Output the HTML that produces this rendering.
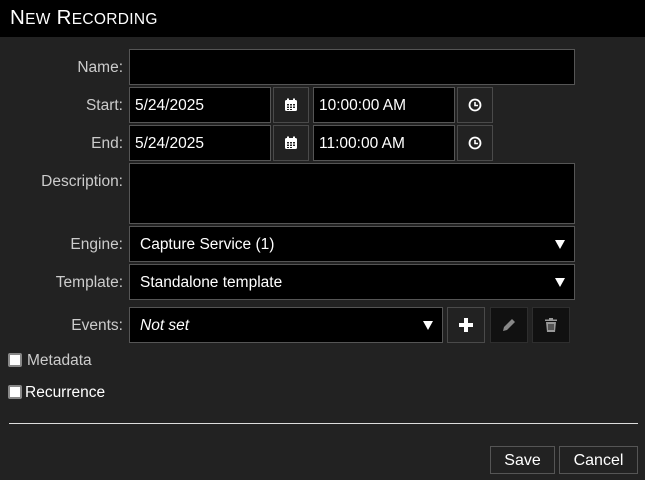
<!DOCTYPE html>
<html><head><meta charset="utf-8"><style>
*{box-sizing:border-box;margin:0;padding:0}
body{width:645px;height:480px;background:#222;font-family:"Liberation Sans",sans-serif;font-size:15.5px;color:#ddd;position:relative;overflow:hidden}
.hdr{position:absolute;left:0;top:0;width:645px;height:37px;background:#000;color:#fff;font-size:20.5px;padding:6px 0 0 10px;letter-spacing:0.3px}
.hdr small{font-size:15.5px}
.lbl{position:absolute;right:522px;color:#ccc;text-align:right;white-space:nowrap}
.in{position:absolute;background:#000;border:1px solid #555;color:#fff;padding-left:5px;line-height:36px;white-space:nowrap}
.btn{position:absolute;background:#222;border:1px solid #4a4a4a;display:flex;align-items:center;justify-content:center}
.dk{background:#111;border-color:#2e2e2e}
.arr{position:absolute;right:9px;top:13px;width:0;height:0;border-left:5px solid transparent;border-right:5px solid transparent;border-top:9px solid #fff}
.cb{position:absolute;width:14px;height:14px;background:#fff;border:2px solid #888;border-radius:2px}
.tb{position:absolute;background:#222;border:1px solid #555;color:#fff;text-align:center;line-height:28px;font-size:16px}
</style></head><body>
<div class="hdr">N<small>EW</small> R<small>ECORDING</small></div>

<div class="lbl" style="top:59px">Name:</div>
<div class="in" style="left:129px;top:49px;width:446px;height:36px"></div>

<div class="lbl" style="top:97px">Start:</div>
<div class="in" style="left:129px;top:87px;width:142px;height:36px">5/24/2025</div>
<div class="btn" style="left:273px;top:87px;width:36px;height:36px"><svg width="14" height="14" viewBox="0 0 14 14"><rect x="1" y="2" width="12" height="11" rx="1.5" fill="#fff"/><rect x="3" y="0.5" width="2" height="3" fill="#fff"/><rect x="9" y="0.5" width="2" height="3" fill="#fff"/><g fill="#222"><rect x="3" y="6" width="2" height="1.5"/><rect x="6" y="6" width="2" height="1.5"/><rect x="9" y="6" width="2" height="1.5"/><rect x="3" y="8.5" width="2" height="1.5"/><rect x="6" y="8.5" width="2" height="1.5"/><rect x="9" y="8.5" width="2" height="1.5"/><rect x="3" y="11" width="2" height="1"/><rect x="6" y="11" width="2" height="1"/></g></svg></div>
<div class="in" style="left:313px;top:87px;width:142px;height:36px">10:00:00 AM</div>
<div class="btn" style="left:457px;top:87px;width:36px;height:36px"><svg width="14" height="14" viewBox="0 0 14 14"><circle cx="7" cy="7" r="5.5" fill="none" stroke="#fff" stroke-width="1.8"/><path d="M7 4v3.5h3" fill="none" stroke="#fff" stroke-width="1.6"/></svg></div>

<div class="lbl" style="top:135px">End:</div>
<div class="in" style="left:129px;top:125px;width:142px;height:36px">5/24/2025</div>
<div class="btn" style="left:273px;top:125px;width:36px;height:36px"><svg width="14" height="14" viewBox="0 0 14 14"><rect x="1" y="2" width="12" height="11" rx="1.5" fill="#fff"/><rect x="3" y="0.5" width="2" height="3" fill="#fff"/><rect x="9" y="0.5" width="2" height="3" fill="#fff"/><g fill="#222"><rect x="3" y="6" width="2" height="1.5"/><rect x="6" y="6" width="2" height="1.5"/><rect x="9" y="6" width="2" height="1.5"/><rect x="3" y="8.5" width="2" height="1.5"/><rect x="6" y="8.5" width="2" height="1.5"/><rect x="9" y="8.5" width="2" height="1.5"/><rect x="3" y="11" width="2" height="1"/><rect x="6" y="11" width="2" height="1"/></g></svg></div>
<div class="in" style="left:313px;top:125px;width:142px;height:36px">11:00:00 AM</div>
<div class="btn" style="left:457px;top:125px;width:36px;height:36px"><svg width="14" height="14" viewBox="0 0 14 14"><circle cx="7" cy="7" r="5.5" fill="none" stroke="#fff" stroke-width="1.8"/><path d="M7 4v3.5h3" fill="none" stroke="#fff" stroke-width="1.6"/></svg></div>

<div class="lbl" style="top:173px">Description:</div>
<div class="in" style="left:129px;top:163px;width:446px;height:61px"></div>

<div class="lbl" style="top:236px">Engine:</div>
<div class="in" style="left:129px;top:226px;width:446px;height:36px;padding-left:10px">Capture Service (1)<div class="arr"></div></div>

<div class="lbl" style="top:274px">Template:</div>
<div class="in" style="left:129px;top:264px;width:446px;height:36px;padding-left:10px">Standalone template<div class="arr"></div></div>

<div class="lbl" style="top:317px">Events:</div>
<div class="in" style="left:129px;top:307px;width:314px;height:36px;padding-left:10px;font-style:italic">Not set<div class="arr"></div></div>
<div class="btn" style="left:447px;top:307px;width:38px;height:36px"><svg width="14" height="14" viewBox="0 0 14 14"><path d="M5 0h4v5h5v4H9v5H5V9H0V5h5z" fill="#fff"/></svg></div>
<div class="btn dk" style="left:490px;top:307px;width:38px;height:36px"><svg width="14" height="14" viewBox="0 0 14 14"><path d="M10 1l3 3-8 8-4 1 1-4z" fill="#888"/></svg></div>
<div class="btn dk" style="left:532px;top:307px;width:38px;height:36px"><svg width="12" height="14" viewBox="0 0 12 14"><path d="M4 0h4v1.5h4v1.5H0V1.5h4z" fill="#999"/><path d="M1 4h10l-1 10H2z" fill="#999"/><path d="M4 6v6M6 6v6M8 6v6" stroke="#111" stroke-width="1"/></svg></div>

<div class="cb" style="left:8px;top:353px"></div>
<div style="position:absolute;left:27px;top:352px;color:#ccc">Metadata</div>
<div class="cb" style="left:8px;top:385px"></div>
<div style="position:absolute;left:25px;top:384px;color:#fff">Recurrence</div>

<div style="position:absolute;left:9px;top:423px;width:629px;height:1px;background:#ddd"></div>

<div class="tb" style="left:490px;top:446px;width:65px;height:28px">Save</div>
<div class="tb" style="left:559px;top:446px;width:79px;height:28px">Cancel</div>
</body></html>
